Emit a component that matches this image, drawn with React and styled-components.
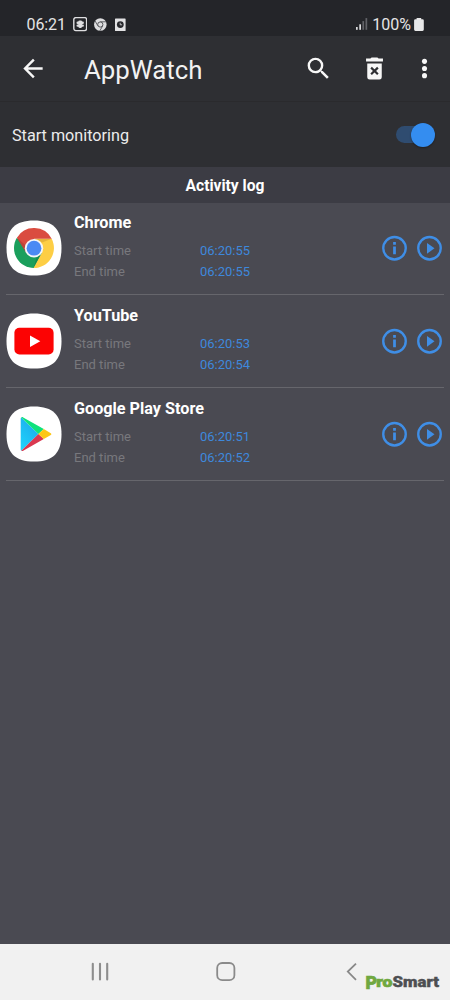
import React, { useState } from "react";
import styled, { createGlobalStyle } from "styled-components";

const GlobalStyle = createGlobalStyle`
  * {
    box-sizing: border-box;
  }

  body {
    margin: 0;
    background: #4a4a52;
    font-family: Roboto, "Liberation Sans", sans-serif;
  }

  button {
    padding: 0;
    border: none;
    background: none;
    cursor: pointer;
  }

  svg {
    display: block;
  }
`;

const Screen = styled.div`
  position: relative;
  display: flex;
  flex-direction: column;
  width: 450px;
  height: 1000px;
  overflow: hidden;
  background: #4a4a52;
`;

const StatusBar = styled.div`
  display: flex;
  flex: none;
  align-items: center;
  justify-content: space-between;
  height: 36px;
  padding: 13px 25px 0 26.5px;
  background: #242529;
  color: #e4e4e5;
  font-size: 16px;
  line-height: 23px;
`;

const StatusGroup = styled.div`
  display: flex;
  align-items: center;
  gap: ${({ $gap }) => $gap}px;
`;

const StatusText = styled.span`
  letter-spacing: ${({ $spacing }) => $spacing || 0}px;
`;

const Toolbar = styled.header`
  display: flex;
  flex: none;
  align-items: center;
  height: 66px;
  padding: 0 11.5px 0 18px;
  border-bottom: 1px solid #2a2a2d;
  background: #2e2f33;
`;

const Title = styled.h1`
  flex: 1;
  margin: 0 0 0 37px;
  padding-top: 2px;
  color: #f2f2f2;
  font-size: 25.8px;
  font-weight: 400;
  line-height: 32px;
`;

const Actions = styled.div`
  display: flex;
  align-items: center;
`;

const IconButton = styled.button`
  width: ${({ $size }) => $size}px;
  height: ${({ $size }) => $size}px;
  margin-left: ${({ $gap }) => $gap || 0}px;
  color: ${({ $color }) => $color || "#f7f7f7"};
`;

const MonitorRow = styled.div`
  display: flex;
  flex: none;
  align-items: center;
  justify-content: space-between;
  height: 65px;
  padding: 1px 15px 0 12px;
  background: #2e2f33;
  color: #ececec;
  font-size: 16.2px;
`;

const Track = styled.button`
  display: flex;
  align-items: center;
  justify-content: ${({ $on }) => ($on ? "flex-end" : "flex-start")};
  width: 35px;
  height: 17px;
  margin: 0 4px 1px 0;
  border-radius: 9px;
  background: ${({ $on }) => ($on ? "#2f4c70" : "#55565b")};
`;

const Thumb = styled.span`
  flex: none;
  width: 24px;
  height: 24px;
  margin-right: -4px;
  border-radius: 50%;
  background: #348df0;
  box-shadow: 0 1px 2px rgba(0, 0, 0, 0.35);
`;

const LogHeader = styled.h2`
  flex: none;
  height: 36px;
  margin: 0;
  background: #3c3c44;
  color: #fff;
  font-size: 15.6px;
  font-weight: 700;
  line-height: 38px;
  text-align: center;
`;

const LogList = styled.ul`
  flex: 1;
  margin: 0;
  padding: 0 6px;
  list-style: none;
`;

const LogItem = styled.li`
  display: flex;
  height: 93px;
  padding-top: 18px;
  border-bottom: 1px solid #66666c;

  &:first-child {
    height: 92px;
    padding-top: 17px;
  }
`;

const AppIcon = styled.div`
  flex: none;
  width: 56px;
  height: 56px;
`;

const Details = styled.div`
  flex: 1;
  margin: -8px 0 0 12px;
`;

const AppName = styled.h3`
  margin: 0 0 7px;
  color: #fff;
  font-size: 16.2px;
  font-weight: 700;
  line-height: 21px;
`;

const TimeRow = styled.div`
  display: grid;
  grid-template-columns: 126px auto;
  color: #78787d;
  font-size: 13px;
  line-height: 21px;
`;

const Time = styled.span`
  color: #3e88dc;
`;

const ItemActions = styled.div`
  display: flex;
  gap: 5px;
  margin-top: 13px;
`;

const NavBar = styled.nav`
  display: grid;
  flex: none;
  grid-template-columns: 126px 129px 12px;
  height: 56px;
  padding: 17px 0 0 90px;
  background: #f1f1f1;
`;

const Watermark = styled.div`
  position: absolute;
  left: 363px;
  top: 970px;
`;

function SquareFlowerIcon() {
  return (
    <svg width="14" height="15" viewBox="0 0 14 15">
      <rect x="0.8" y="0.6" width="12.8" height="13" rx="2" fill="none" stroke="#dedee0" strokeWidth="1.4" />
      <g fill="#dedee0">
        <rect x="5.3" y="3.4" width="3.8" height="7.6" rx="1.4" />
        <rect x="3.5" y="4.6" width="7.4" height="2.4" rx="1.1" />
        <rect x="3.5" y="7.4" width="7.4" height="2.4" rx="1.1" />
      </g>
    </svg>
  );
}

function SmallChromeIcon() {
  return (
    <svg width="14" height="14" viewBox="0 0 14 14">
      <circle cx="6.3" cy="6.5" r="6.3" fill="#dedee0" />
      <circle cx="6.3" cy="6.5" r="2.6" fill="none" stroke="#55565a" strokeWidth="1" />
      <path d="M6.3 3.8H12M3.9 7.8L1.1 3M8.7 7.8l-2.8 4.9" stroke="#55565a" strokeWidth="0.9" />
    </svg>
  );
}

function ClockFileIcon() {
  return (
    <svg width="12" height="14" viewBox="0 0 12 14">
      <rect x="0" y="0.5" width="10.6" height="12.6" rx="0.6" fill="#e2e2e4" />
      <circle cx="5.3" cy="6.6" r="3.4" fill="#27282c" />
      <path d="M5.2 4.8v2h1.9" fill="none" stroke="#e2e2e4" strokeWidth="0.8" />
    </svg>
  );
}

function SignalIcon() {
  return (
    <svg width="13" height="13" viewBox="0 0 13 13">
      <rect x="0" y="9" width="1.7" height="2.8" fill="#dcdcde" />
      <rect x="3.3" y="6.3" width="1.7" height="5.5" fill="#dcdcde" />
      <rect x="6.4" y="3.1" width="1.7" height="8.7" fill="#626368" />
      <rect x="9.5" y="0.1" width="1.7" height="11.7" fill="#626368" />
    </svg>
  );
}

function BatteryIcon() {
  return (
    <svg width="11" height="14" viewBox="0 0 11 14">
      <path d="M2.6 0h4.6v1.3h1.3a1.3 1.3 0 0 1 1.3 1.3v9a1.3 1.3 0 0 1-1.3 1.3H1.4A1.3 1.3 0 0 1 .1 11.6V2.6a1.3 1.3 0 0 1 1.3-1.3h1.2z" fill="#e8e8e9" />
    </svg>
  );
}

function BackIcon() {
  return (
    <svg width="29" height="29" viewBox="0 0 24 24" fill="currentColor">
      <path d="M20.4 11H8.23l5.59-5.59L12.4 4l-8 8 8 8 1.41-1.41L8.23 13H20.4v-2z" />
    </svg>
  );
}

function SearchIcon() {
  return (
    <svg width="29" height="29" viewBox="0 0 24 24" fill="currentColor">
      <path d="M15.5 14h-.79l-.28-.27A6.47 6.47 0 0 0 16 9.5 6.5 6.5 0 1 0 9.5 16c1.61 0 3.09-.59 4.23-1.57l.27.28v.79l5 4.99L20.49 19l-4.99-5zm-6 0C7.01 14 5 11.99 5 9.5S7.01 5 9.5 5 14 7.01 14 9.5 11.99 14 9.5 14z" />
    </svg>
  );
}

function TrashIcon() {
  return (
    <svg width="29" height="29" viewBox="0 0 24 24">
      <path d="M6 7.8h12v11.4a1.9 1.9 0 0 1-1.9 1.8H7.9A1.9 1.9 0 0 1 6 19.2zM5 3.8h3.6l1-.9h4.8l1 .9H19v2.4H5z" fill="currentColor" />
      <path d="M9.2 11.3l5.6 5.4M14.8 11.3l-5.6 5.4" stroke="#2e2f33" strokeWidth="1.8" />
    </svg>
  );
}

function MoreIcon() {
  return (
    <svg width="29" height="29" viewBox="0 0 24 24" fill="currentColor">
      <circle cx="12" cy="6.1" r="2.1" />
      <circle cx="12" cy="12" r="2.1" />
      <circle cx="12" cy="17.9" r="2.1" />
    </svg>
  );
}

function InfoIcon() {
  return (
    <svg width="30" height="30" viewBox="0 0 24 24">
      <circle cx="12.4" cy="12.2" r="9" fill="none" stroke="currentColor" strokeWidth="1.9" />
      <path d="M11.3 10.7h2.2V17h-2.2zM11.3 7.2h2.2v2.1h-2.2z" fill="currentColor" />
    </svg>
  );
}

function PlayIcon() {
  return (
    <svg width="30" height="30" viewBox="0 0 24 24">
      <circle cx="12.4" cy="12.2" r="9" fill="none" stroke="currentColor" strokeWidth="1.9" />
      <path d="M10.4 16.5l6-4.3-6-4.3z" fill="currentColor" />
    </svg>
  );
}

function IconPlate({ children }) {
  return (
    <svg width="56" height="56" viewBox="0 0 56 56">
      <path d="M28 0.4C47 0.4 55.5 9 55.5 28S47 55.6 28 55.6 0.5 47 0.5 28 9 0.4 28 0.4z" fill="#fff" />
      {children}
    </svg>
  );
}

function ChromeLogo() {
  return (
    <IconPlate>
      <path d="M28 28L10.68 18A20 20 0 0 0 28 48L36 33z" fill="#1a9f5c" />
      <path d="M28 18.8H45.7A20 20 0 0 1 27.6 48L36 32.6z" fill="#fdce45" />
      <path d="M10.9 17.7A20 20 0 0 1 45.7 18.8H28L20 32.6z" fill="#da4c40" />
      <path d="M28 18.8H45.7l-9.6 3.6z" fill="#c9932c" opacity="0.45" />
      <path d="M10.9 17.7L20 32.6l1-6z" fill="#8f3a2c" opacity="0.4" />
      <path d="M27.6 48L36 32.6l-5.4 4.2z" fill="#0e6b3c" opacity="0.35" />
      <circle cx="28" cy="28.2" r="9.2" fill="#f4f6f8" />
      <circle cx="28" cy="28.2" r="7.4" fill="#4a8af4" />
    </IconPlate>
  );
}

function YouTubeLogo() {
  return (
    <IconPlate>
      <rect x="8.4" y="14.7" width="39.2" height="26.8" rx="5" fill="#fc0303" />
      <path d="M24 22.4v11.5L34.3 28.2z" fill="#fff" />
    </IconPlate>
  );
}

function PlayStoreLogo() {
  return (
    <IconPlate>
      <defs>
        <linearGradient id="storeBlue" x1="0.8" y1="0" x2="0.2" y2="1">
          <stop offset="0" stopColor="#1ba8e8" />
          <stop offset="1" stopColor="#20d2fd" />
        </linearGradient>
      </defs>
      <path d="M15.3 11.4L32.4 28 15.3 44.8c-.4-.3-.6-.7-.6-1.4V12.8c0-.7.2-1.2.6-1.4z" fill="url(#storeBlue)" />
      <path d="M15.3 11.4c.5-.4 1.2-.4 1.9 0l20.6 11.7-5.4 4.9z" fill="#0fe27c" />
      <path d="M15.3 44.8c.5.4 1.2.4 1.9 0l20.6-11.7-5.4-5.1z" fill="#d93850" />
      <path d="M37.8 23.1l6.6 3.8c1.3.7 1.3 1.7 0 2.4l-6.6 3.8-5.4-5.1z" fill="#fdc716" />
    </IconPlate>
  );
}

function RecentsIcon() {
  return (
    <svg width="20" height="22" viewBox="0 0 20 22">
      <path d="M2.8 2.7v15.8M10 2.7v15.8M17.2 2.7v15.8" stroke="#8d8d8d" strokeWidth="2.1" strokeLinecap="round" />
    </svg>
  );
}

function HomeIcon() {
  return (
    <svg width="20" height="22" viewBox="0 0 20 22">
      <rect x="1.2" y="2" width="17.2" height="17.2" rx="5" fill="none" stroke="#8a8a8a" strokeWidth="1.8" />
    </svg>
  );
}

function NavBackIcon() {
  return (
    <svg width="12" height="22" viewBox="0 0 12 22">
      <path d="M11 2.6L2.8 10.6l8.2 8.2" fill="none" stroke="#888" strokeWidth="1.8" />
    </svg>
  );
}

function WatermarkLogo() {
  return (
    <svg width="80" height="24" viewBox="0 0 80 24" fontFamily="Roboto, sans-serif" fontWeight="900">
      <text y="16.6" fill="#70a840" stroke="#70a840" strokeWidth="0.7">
        <tspan x="2.4" y="18.6" fontSize="19" textLength="11.5" lengthAdjust="spacingAndGlyphs">P</tspan>
        <tspan x="13.2" y="16.6" fontSize="15.5" textLength="16.2" lengthAdjust="spacingAndGlyphs">ro</tspan>
        <tspan x="29.6" y="16.6" fontSize="14.5" fill="#4d4f52" stroke="#4d4f52" strokeWidth="0.4" textLength="46.5" lengthAdjust="spacingAndGlyphs">Smart</tspan>
      </text>
    </svg>
  );
}

const entries = [
  { name: "Chrome", start: "06:20:55", end: "06:20:55", Logo: ChromeLogo },
  { name: "YouTube", start: "06:20:53", end: "06:20:54", Logo: YouTubeLogo },
  { name: "Google Play Store", start: "06:20:51", end: "06:20:52", Logo: PlayStoreLogo },
];

function LogEntry({ name, start, end, Logo }) {
  return (
    <LogItem>
      <AppIcon>
        <Logo />
      </AppIcon>
      <Details>
        <AppName>{name}</AppName>
        <TimeRow>
          <span>Start time</span>
          <Time>{start}</Time>
        </TimeRow>
        <TimeRow>
          <span>End time</span>
          <Time>{end}</Time>
        </TimeRow>
      </Details>
      <ItemActions>
        <IconButton $size={30} $color="#3f8ee6">
          <InfoIcon />
        </IconButton>
        <IconButton $size={30} $color="#3f8ee6">
          <PlayIcon />
        </IconButton>
      </ItemActions>
    </LogItem>
  );
}

function App() {
  const [monitoring, setMonitoring] = useState(true);

  return (
    <>
      <GlobalStyle />
      <Screen>
        <StatusBar>
          <StatusGroup $gap={7}>
            <StatusText $spacing={-0.1}>06:21</StatusText>
            <SquareFlowerIcon />
            <SmallChromeIcon />
            <ClockFileIcon />
          </StatusGroup>
          <StatusGroup $gap={3}>
            <SignalIcon />
            <StatusText>100%</StatusText>
            <BatteryIcon />
          </StatusGroup>
        </StatusBar>
        <Toolbar>
          <IconButton $size={29}>
            <BackIcon />
          </IconButton>
          <Title>AppWatch</Title>
          <Actions>
            <IconButton $size={29}>
              <SearchIcon />
            </IconButton>
            <IconButton $size={29} $gap={27.5}>
              <TrashIcon />
            </IconButton>
            <IconButton $size={29} $gap={20.5}>
              <MoreIcon />
            </IconButton>
          </Actions>
        </Toolbar>
        <MonitorRow>
          <span>Start monitoring</span>
          <Track $on={monitoring} onClick={() => setMonitoring((prev) => !prev)}>
            <Thumb />
          </Track>
        </MonitorRow>
        <LogHeader>Activity log</LogHeader>
        <LogList>
          {entries.map((entry) => (
            <LogEntry key={entry.name} {...entry} />
          ))}
        </LogList>
        <NavBar>
          <RecentsIcon />
          <HomeIcon />
          <NavBackIcon />
        </NavBar>
        <Watermark>
          <WatermarkLogo />
        </Watermark>
      </Screen>
    </>
  );
}

export default App;
